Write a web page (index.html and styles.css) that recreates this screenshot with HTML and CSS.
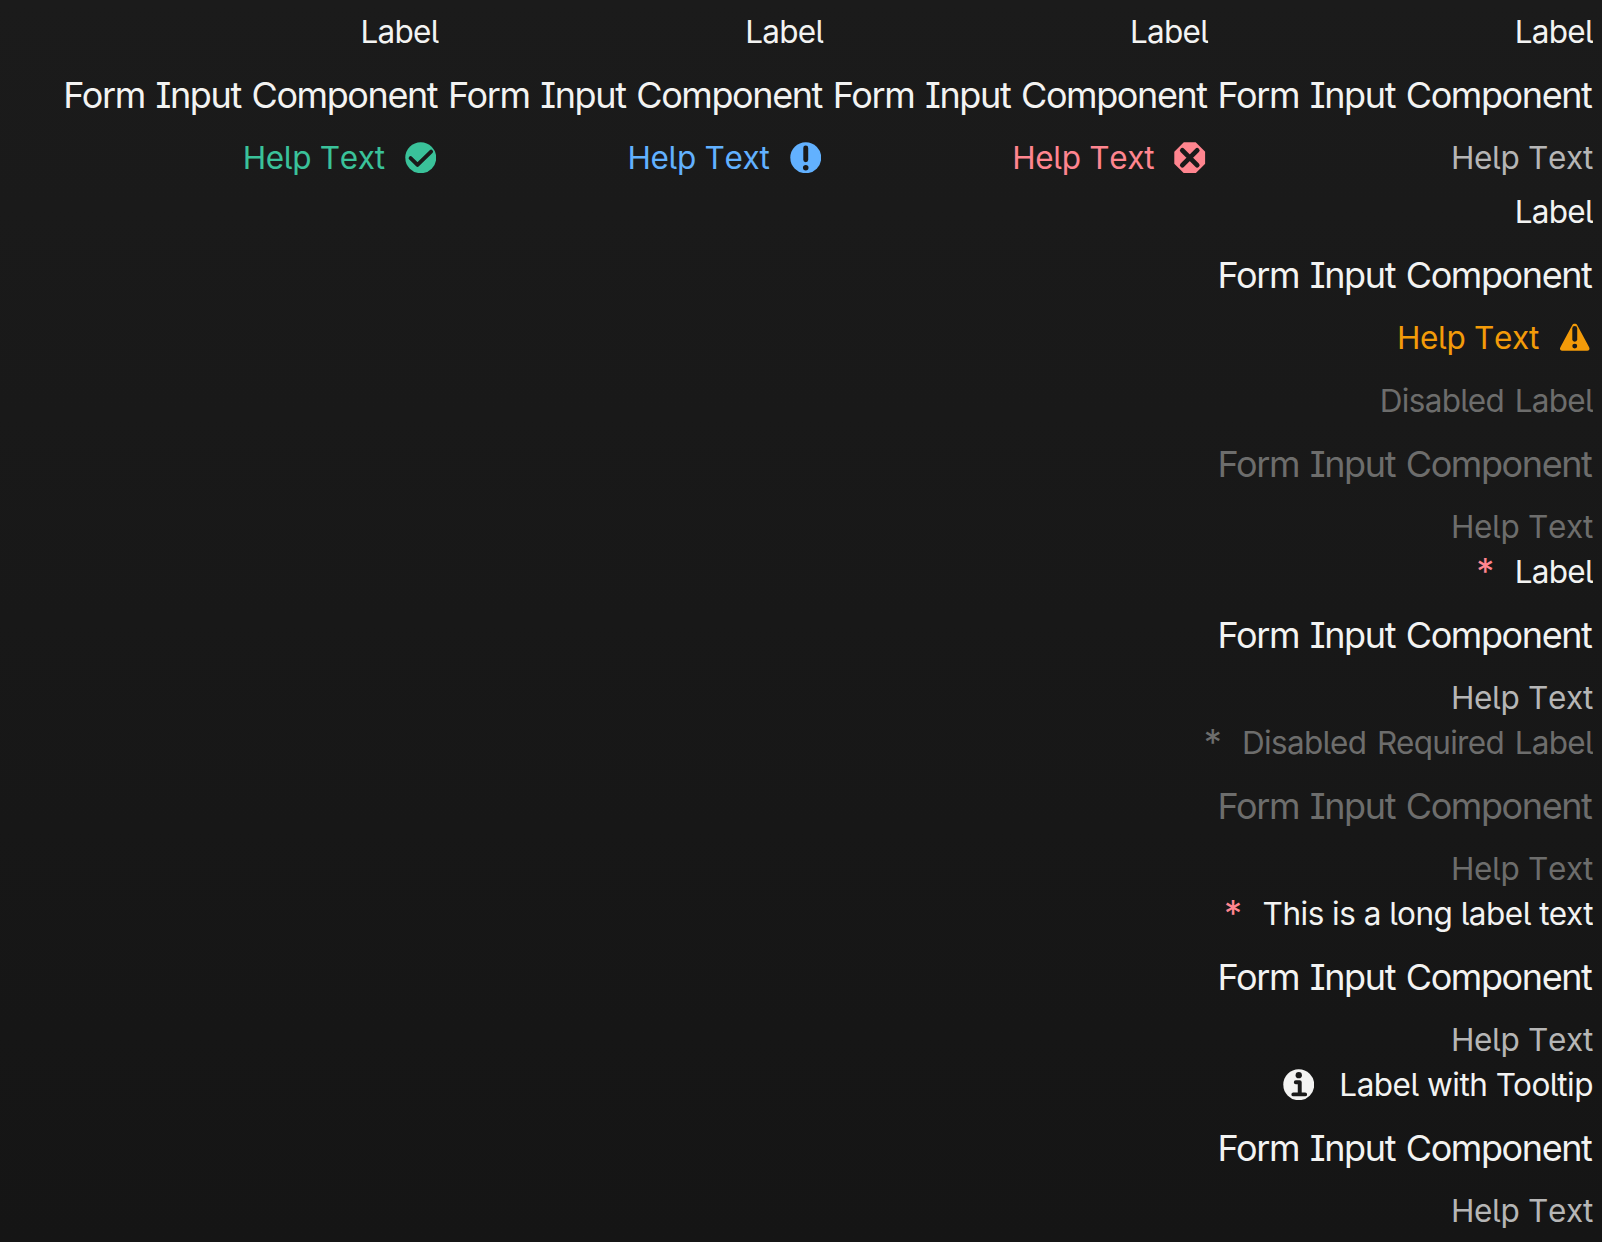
FILE: index.html
```html
<!DOCTYPE html>
<html lang="en">
<head>
<meta charset="utf-8">
<title>Form fields</title>
<link rel="stylesheet" href="styles.css">
</head>
<body>
<svg class="defs" width="0" height="0" aria-hidden="true">
<symbol id="success" viewBox="0 0 32 32"><circle class="shape" cx="16" cy="16" r="15.7"/><path class="cut" d="M5.700 16.400l7 6.800L26.500 9.700"/></symbol>
<symbol id="info" viewBox="0 0 32 32"><circle class="shape" cx="16" cy="16" r="15.7"/><path class="cut wide" d="M16 6v12"/><circle class="dot" cx="16" cy="26.200" r="2.800"/></symbol>
<symbol id="error" viewBox="0 0 32 32"><path class="shape" d="M10 .3h12L31.700 10v12L22 31.700H10L.3 22V10z"/><path class="cut wide" d="M8.500 8.500l15 15m0-15l-15 15"/></symbol>
<symbol id="warning" viewBox="0 0 32 32"><path class="shape" d="M13.400 3.200c1-2 4.200-2 5.200 0l12 22.500c1 2 0 3.500-2 3.500H3.400c-2 0-3-1.500-2-3.500z"/><path class="cut wide" d="M16 6.500v11"/><circle class="dot" cx="16" cy="24.500" r="2.500"/></symbol>
<symbol id="hint" viewBox="0 0 32 32"><circle class="shape" cx="16" cy="16" r="15.700"/><circle class="dot" cx="16" cy="6.300" r="3.200"/><path class="cut" d="M13 13.500h4v11.500M10.500 25.800h12"/></symbol>
</svg>
<main class="page">
<section class="row row-first">
<div class="field"><div class="label">Label</div><div class="control">Form Input Component</div><div class="help success">Help Text<svg class="icon"><use href="#success"/></svg></div></div>
<div class="field"><div class="label">Label</div><div class="control">Form Input Component</div><div class="help info">Help Text<svg class="icon"><use href="#info"/></svg></div></div>
<div class="field"><div class="label">Label</div><div class="control">Form Input Component</div><div class="help error">Help Text<svg class="icon"><use href="#error"/></svg></div></div>
<div class="field"><div class="label">Label</div><div class="control">Form Input Component</div><div class="help">Help Text</div></div>
</section>
<section class="row row-warning"><div class="field"><div class="label">Label</div><div class="control">Form Input Component</div><div class="help warning">Help Text<svg class="icon"><use href="#warning"/></svg></div></div></section>
<section class="row"><div class="field disabled"><div class="label">Disabled Label</div><div class="control">Form Input Component</div><div class="help">Help Text</div></div></section>
<section class="row"><div class="field"><div class="label"><span class="required">*</span>Label</div><div class="control">Form Input Component</div><div class="help">Help Text</div></div></section>
<section class="row"><div class="field disabled"><div class="label"><span class="required">*</span>Disabled Required Label</div><div class="control">Form Input Component</div><div class="help">Help Text</div></div></section>
<section class="row"><div class="field"><div class="label label-long"><span class="required">*</span>This is a long label text</div><div class="control">Form Input Component</div><div class="help">Help Text</div></div></section>
<section class="row"><div class="field"><div class="label label-long"><svg class="icon hint"><use href="#hint"/></svg>Label with Tooltip</div><div class="control">Form Input Component</div><div class="help">Help Text</div></div></section>
</main>
</body>
</html>
```
FILE: styles.css
```css
html { background: #151515; }
body {
  margin: 0;
  height: 1242px;
  overflow: hidden;
  color: #f3f3f2;
  background: linear-gradient(#1b1b1b, #151515);
  font-family: Inter, sans-serif;
  font-feature-settings: "cv05", "cv08";
}
.defs { display: block; }
.page { padding: 9px 9px 0 0; }
.row { display: flex; justify-content: flex-end; height: 171px; }
.row-first { height: 180px; }
.row-warning { height: 189px; }
.field { flex: none; width: 384.75px; }
.label, .help {
  display: flex;
  align-items: center;
  justify-content: flex-end;
  height: 45px;
  font-size: 31.5px;
  line-height: 45px;
  white-space: nowrap;
}
.label { letter-spacing: -0.7px; word-spacing: 2.5px; clip-path: inset(0 0 0 -20px); }
.label-long { letter-spacing: -0.5px; word-spacing: 0; }
.control {
  height: 81px;
  padding-right: 1.5px;
  line-height: 82px;
  font-size: 36px;
  letter-spacing: -1.4px;
  word-spacing: 2px;
  text-align: right;
  white-space: nowrap;
}
.help { color: #b6b6b6; font-kerning: none; letter-spacing: -0.3px; }
.icon { width: 31.5px; height: 31.5px; margin: 0 2.5px 0 20px; }
.icon.hint { margin: 0 25px 0 0; }
.required { margin-right: 21px; color: #ff858f; font-size: 36px; }
.success { color: #3ac29a; }
.info { color: #62b1ff; }
.error { color: #ff858f; }
.warning { color: #f39b09; }
.disabled, .disabled .help, .disabled .required { color: #6d6d6c; }
.shape { fill: currentColor; }
.dot { fill: #1a1a1a; }
.cut { fill: none; stroke: #1a1a1a; stroke-width: 4; stroke-linecap: round; stroke-linejoin: round; }
.wide { stroke-width: 5; }
```
